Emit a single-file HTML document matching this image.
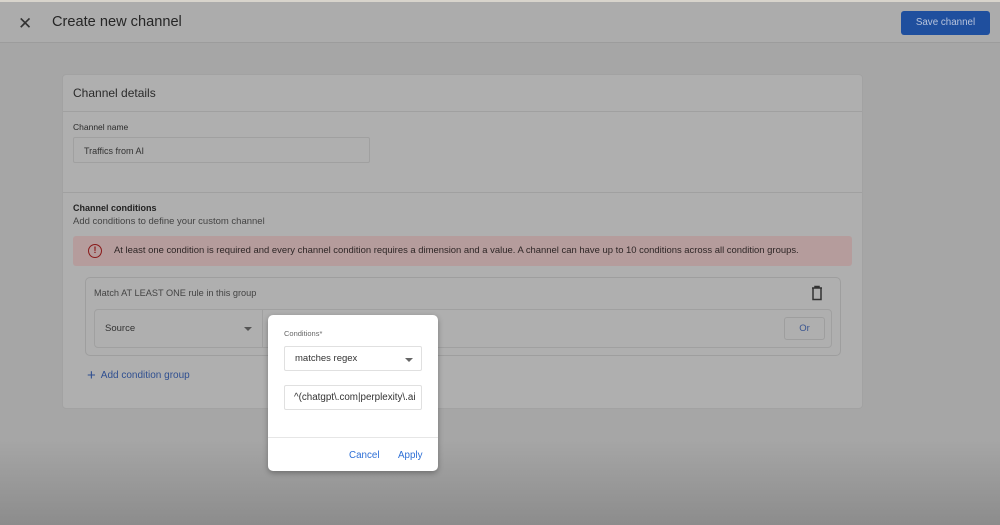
<!DOCTYPE html>
<html><head><style>
*{box-sizing:border-box;margin:0;padding:0}
body{width:1000px;height:525px;overflow:hidden;background:#a6a6a6;font-family:"Liberation Sans",sans-serif;position:relative}
.hdr{position:absolute;left:0;top:0;width:1000px;height:43px;background:#acacac;border-bottom:1px solid #9c9c9c;border-top:2px solid #d8d4cc}
.hdr .x{position:absolute;left:18px;top:12px;font-size:17px;color:#333}
.hdr .t{position:absolute;left:52px;top:12px;font-size:14.6px;color:#262626}
.save{position:absolute;left:901px;top:9px;width:89px;height:24px;background:#1f4f9e;border-radius:3px;color:#b8c4dc;font-size:9.8px;text-align:center;line-height:24px}
.card{position:absolute;left:62px;top:74px;width:801px;height:335px;background:#afafaf;border:1px solid #a2a2a2;border-radius:4px}
.abs{position:absolute}
.line{position:absolute;left:0;width:100%;height:1px;background:#a0a0a0}
.fade{position:absolute;left:0;top:440px;width:1000px;height:85px;background:linear-gradient(#a6a6a600,#8c8c8c)}
.dlg{position:absolute;left:268px;top:315px;width:170px;height:156px;background:#fff;border-radius:5px;box-shadow:0 2px 6px rgba(0,0,0,.3)}
.inp{position:absolute;left:16px;width:138px;height:25px;border:1px solid #e0e0e0;border-radius:2px;font-size:9.5px;color:#333;padding-left:10px;line-height:23px;overflow:hidden;white-space:nowrap}
</style></head><body>
<div class="hdr"><span class="x">✕</span><span class="t">Create new channel</span><div class="save">Save channel</div></div>
<div class="card">
 <div class="abs" style="left:10px;top:11px;font-size:12px;color:#2a2a2a">Channel details</div>
 <div class="line" style="top:36px"></div>
 <div class="abs" style="left:10px;top:47px;font-size:8.5px;color:#2a2a2a">Channel name</div>
 <div class="abs" style="left:10px;top:62px;width:297px;height:26px;border:1px solid #a0a0a0;border-radius:2px;font-size:9px;color:#333;padding:8px 10px">Traffics from AI</div>
 <div class="line" style="top:117px"></div>
 <div class="abs" style="left:10px;top:128px;font-size:9px;font-weight:bold;color:#222">Channel conditions</div>
 <div class="abs" style="left:10px;top:141px;font-size:9.5px;color:#444">Add conditions to define your custom channel</div>
 <div class="abs" style="left:10px;top:161px;width:779px;height:30px;background:#b59c9c;border-radius:3px">
  <div class="abs" style="left:15px;top:8px;width:14px;height:14px;border:1.5px solid #8a1a1a;border-radius:50%;color:#8a1a1a;font-size:9px;font-weight:bold;text-align:center;line-height:11px">!</div>
  <div class="abs" style="left:41px;top:9px;font-size:9.45px;color:#2e2626;white-space:nowrap">At least one condition is required and every channel condition requires a dimension and a value. A channel can have up to 10 conditions across all condition groups.</div>
 </div>
 <div class="abs" style="left:22px;top:202px;width:756px;height:79px;border:1px solid #9e9e9e;border-radius:5px">
  <div class="abs" style="left:8px;top:10px;font-size:9.2px;color:#444">Match AT LEAST ONE rule in this group</div>
  <svg class="abs" style="left:724px;top:7px" width="14" height="16" viewBox="0 0 14 16"><path d="M2 3h10M5 3V1.5h4V3M3 3.5v11h8v-11" fill="none" stroke="#333" stroke-width="1.5"/></svg>
  <div class="abs" style="left:8px;top:31px;width:738px;height:39px;border:1px solid #a0a0a0;border-radius:4px">
   <div class="abs" style="left:10px;top:13px;font-size:9.5px;color:#333">Source</div>
   <div class="abs" style="left:149px;top:17px;border:4px solid transparent;border-top:4px solid #555"></div>
   <div class="abs" style="left:167px;top:0;width:1px;height:37px;background:#a0a0a0"></div>
   <div class="abs" style="left:689px;top:7px;width:41px;height:23px;border:1px solid #9e9e9e;border-radius:3px;font-size:9.5px;color:#3a5590;text-align:center;line-height:21px">Or</div>
  </div>
 </div>
 <div class="abs" style="left:24px;top:292px;font-size:10px;color:#2f4f90"><span style="font-size:15px;vertical-align:-2px">+</span>&nbsp; Add condition group</div>
</div>
<div class="fade"></div>
<div class="dlg">
 <div class="abs" style="left:16px;top:14px;font-size:7.5px;color:#666">Conditions*</div>
 <div class="inp" style="top:31px">matches regex<span style="position:absolute;left:120px;top:11px;border:4px solid transparent;border-top:4px solid #666;width:0;height:0"></span></div>
 <div class="inp" style="top:70px;font-size:9.8px;padding-left:9px">^(chatgpt\.com|perplexity\.ai</div>
 <div class="abs" style="left:0;top:122px;width:170px;height:1px;background:#e6e6e6"></div>
 <div class="abs" style="left:81px;top:135px;font-size:9.8px;color:#2d6fd6">Cancel</div>
 <div class="abs" style="left:130px;top:135px;font-size:9.8px;color:#2d6fd6">Apply</div>
</div>
</body></html>
